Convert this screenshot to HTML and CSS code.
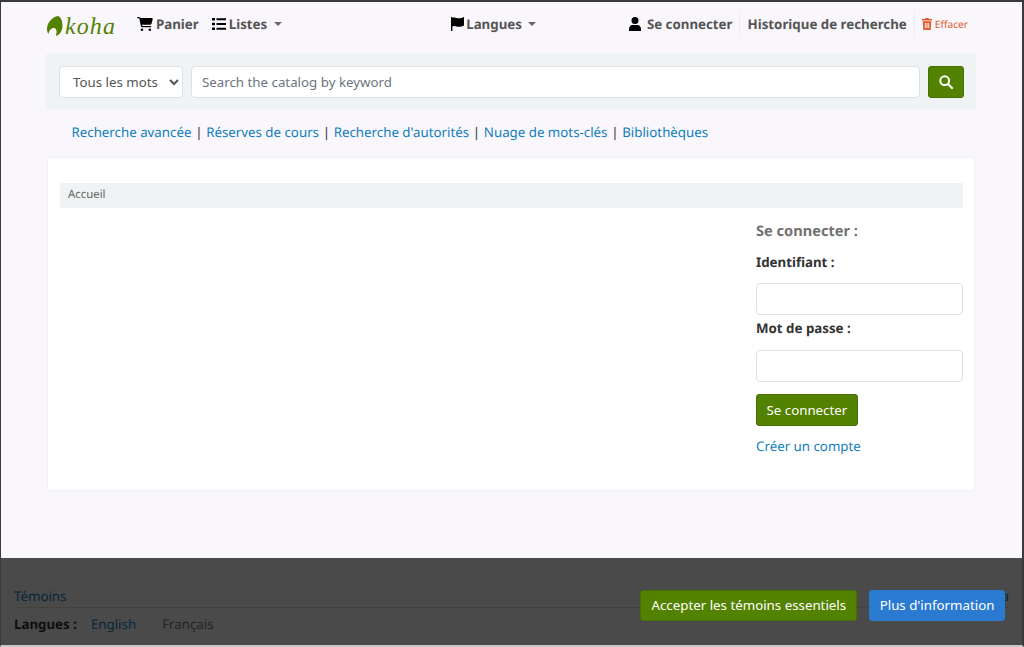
FILE: index.html
```html
<!DOCTYPE html>
<html lang="fr">
<head>
    <title>Koha › Se connecter</title>
    <link rel="stylesheet" href="styles.css">
</head>
<body>
<div class="window">
    <nav class="topbar">
        <a class="logo" href="#">
            <svg class="logo-leaf" viewBox="0 0 16 20" width="16" height="20"><path d="M11 0C5 1 0 7 0 13c0 2 .5 4 1.500 5 .5-3 2.500-6 5-6 2.500 0 3.500 2 3 5-.2 1-.5 2-.5 3 3.500-1 6.500-5 6.500-10C15.500 5 14 1 11 0z"/></svg>
            <span class="logo-text">koha</span>
        </a>
        <a class="nav-link cart" href="#">
            <svg class="icon" viewBox="0 0 576 512" width="16" height="14"><path d="M0 24C0 11 11 0 24 0h45c22 0 41 12 51 32h411c26 0 46 25 39 51l-41 152c-8 28-33 47-62 47H175l5 29c2 11 12 19 24 19h288c13 0 24 11 24 24s-11 24-24 24H204c-35 0-65-25-71-59L81 52c-1-4-4-4-12-4H24C11 48 0 37 0 24zm128 440a48 48 0 1 1 96 0 48 48 0 1 1-96 0zm336-48a48 48 0 1 1 0 96 48 48 0 1 1 0-96z"/></svg>
            Panier
        </a>
        <a class="nav-link caret lists" href="#">
            <svg class="icon" viewBox="0 0 14 12" width="14" height="12"><path d="M0 0h3v2.500H0zM4.500 0.300H14v2H4.500zM0 4.700h3v2.500H0zM4.500 5h9.500v2H4.500zM0 9.400h3v2.500H0zM4.500 9.700H14v2H4.500z"/></svg>
            Listes
        </a>
        <a class="nav-link caret langs" href="#">
            <svg class="icon" viewBox="0 0 14 14" width="13" height="14" preserveAspectRatio="none"><path d="M0 0h1.500v1c3-1.500 5 .5 7 .3 2 0 3.500-.5 5.500-1.300v8.500c-2 1-3.500 1.300-5.500 1.300-2 .2-4-1.700-7-.3V14H0z"/></svg>
            Langues
        </a>
        <div class="nav-right">
            <a class="nav-link user" href="#">
                <svg class="icon" viewBox="0 0 12 14" width="12" height="14"><circle cx="6" cy="3.500" r="3.500"/><path d="M3.500 8h5C10.500 8 12 9.800 12 12v2H0v-2c0-2.200 1.500-4 3.500-4z"/></svg>
                Se connecter
            </a>
            <a class="nav-link history" href="#">Historique de recherche</a>
            <a class="clear" href="#">
                <svg class="icon" viewBox="0 0 10 12" width="10" height="12"><path d="M3.500 0h3l.5 1h3v1.500H0V1h3zM.7 3.300h8.600L8.700 12H1.300zM2.800 5v5.300h.9V5zm2.700 0h-1v5.300h1zm1.700 0h-.9v5.300h.9z"/></svg>
                Effacer
            </a>
        </div>
    </nav>

    <form class="searchbar">
        <select class="search-type"><option>Tous les mots</option></select>
        <input class="search-input" type="text" placeholder="Search the catalog by keyword">
        <button class="btn btn-green search-btn" type="button" aria-label="Rechercher">
            <svg viewBox="0 0 14 14" width="14" height="14"><circle cx="5.700" cy="5.700" r="4.400" fill="none" stroke="#fff" stroke-width="2"/><path d="M9 9l4 4" stroke="#fff" stroke-width="2.200" stroke-linecap="round"/></svg>
        </button>
    </form>

    <ul class="more-search">
        <li><a href="#">Recherche avancée</a></li>
        <li><a href="#">Réserves de cours</a></li>
        <li><a href="#">Recherche d'autorités</a></li>
        <li><a href="#">Nuage de mots-clés</a></li>
        <li><a href="#">Bibliothèques</a></li>
    </ul>

    <main class="main">
        <div class="breadcrumb">Accueil</div>
        <div class="login-row">
            <form class="login">
                <h3>Se connecter :</h3>
                <label for="userid">Identifiant :</label>
                <input id="userid" type="text">
                <label for="password">Mot de passe :</label>
                <input id="password" type="password">
                <button class="btn btn-green login-btn" type="button">Se connecter</button>
                <a class="register" href="#">Créer un compte</a>
            </form>
        </div>
    </main>

    <footer class="footer">
        <div class="footer-top">
            <a href="#">Témoins</a>
            <a href="#">Propulsé par Koha</a>
        </div>
        <div class="footer-langs">
            <strong>Langues :</strong>
            <a href="#">English</a>
            <span>Français</span>
        </div>
    </footer>

    <div class="cookie-bar">
        <button class="btn btn-green" type="button">Accepter les témoins essentiels</button>
        <button class="btn btn-blue" type="button">Plus d'information</button>
    </div>
</div>
</body>
</html>
```

FILE: styles.css
```css
* {
    box-sizing: border-box;
}
html, body {
    margin: 0;
    height: 647px;
    overflow: hidden;
}
body {
    font-family: "Noto Sans", sans-serif;
    font-size: 13.3px;
    color: #333;
    background: #fff;
    text-rendering: geometricPrecision;
}
a {
    color: #127fbb;
    text-decoration: none;
}
.window {
    position: relative;
    height: 647px;
    background: #f9f7fc;
    border-top: 2px solid #3a3a3a;
    border-left: 1px solid #3a3a3a;
    border-right: 2px solid #3a3a3a;
    border-bottom: 2px solid #c8c8c8;
    overflow: hidden;
}
.topbar {
    display: flex;
    align-items: center;
    height: 44px;
    padding: 0 54px 0 46px;
}
.logo {
    display: flex;
    align-items: center;
    gap: 2px;
    width: 90px;
    margin-top: 4px;
    color: #538200;
}
.logo-leaf {
    fill: #538200;
}
.logo-text {
    margin-top: 2px;
    font-family: "Liberation Serif", serif;
    font-style: italic;
    font-size: 24px;
    letter-spacing: 1.100px;
    line-height: 1;
}
.nav-link {
    display: flex;
    align-items: center;
    gap: 3px;
    font-weight: 700;
    color: #555;
    white-space: nowrap;
}
.icon {
    fill: #000;
}
.caret::after {
    content: "";
    margin-left: 4px;
    border-top: 4px solid #666;
    border-left: 4px solid transparent;
    border-right: 4px solid transparent;
}
.lists {
    margin-left: 13px;
}
.langs {
    gap: 2px;
    margin-left: 169px;
}
.nav-right {
    display: flex;
    align-items: center;
    margin-left: auto;
}
.user {
    gap: 6px;
}
.history {
    margin-left: 6px;
    padding: 0 7px 0 8px;
    height: 25px;
    border-left: 1px solid #eee;
    border-right: 1px solid #eee;
}
.clear {
    display: flex;
    align-items: center;
    gap: 3px;
    margin-left: 7px;
    font-size: 10.2px;
    color: #e2582c;
}
.clear .icon {
    fill: #e2582c;
}
.searchbar {
    display: flex;
    align-items: center;
    height: 56px;
    margin: 8px 46px 0 45px;
    padding: 0 12px 0 13px;
    background: #eff3f3;
}
.search-type, .search-input, .login input {
    height: 32px;
    border: 1px solid #dee2e6;
    border-radius: 4px;
    background: #fff;
    font-family: inherit;
    font-size: 13.3px;
    color: #555;
}
.search-type {
    width: 124px;
    padding: 0 0 0 9px;
    margin-right: 8px;
}
.search-input {
    flex: 1;
    padding: 0 10px;
    margin-right: 8px;
}
.search-input::placeholder {
    color: #6c757d;
}
.btn {
    font-family: inherit;
    font-size: 13.3px;
    color: #fff;
    height: 31px;
    padding: 0 10px 1px;
    border-radius: 3px;
    cursor: pointer;
}
.btn-green {
    background: #538200;
    border: 1px solid #476f00;
}
.btn-blue {
    padding: 0 9.5px 1px;
    background: #2a7ad2;
    border: 1px solid #2a7ad2;
}
.search-btn {
    display: flex;
    align-items: center;
    justify-content: center;
    width: 36px;
    height: 32px;
    padding: 0;
}
.more-search {
    display: flex;
    list-style: none;
    margin: 0;
    padding: 12px 0 0 70.5px;
    line-height: 20px;
}
.more-search li + li::before {
    content: "|";
    margin: 0 3.7px;
    color: #333;
}
.main {
    height: 334px;
    margin: 15px 47px 0 46px;
    padding: 25px 11px 0 12px;
    background: #fff;
    border: 1px solid #f3f1f6;
}
.breadcrumb {
    height: 25px;
    padding-left: 8px;
    font-size: 11.4px;
    line-height: 24px;
    color: #666;
    background: #eff3f3;
}
.login-row {
    display: flex;
    justify-content: flex-end;
}
.login {
    display: flex;
    flex-direction: column;
    align-items: flex-start;
    width: 207px;
}
.login h3 {
    margin: 13px 0 0;
    font-size: 14.6px;
    line-height: 20px;
    font-weight: 700;
    color: #727272;
}
.login label {
    font-weight: 700;
    line-height: 20px;
    color: #333;
}
.login h3 + label {
    margin-top: 11px;
}
.login input {
    width: 100%;
    margin: 11px 0 0;
}
.login input + label {
    margin-top: 3px;
}
.login input + label + input {
    margin-top: 12px;
}
.login-btn {
    margin-top: 12px;
    height: 32px;
    padding: 0 9.5px;
}
.register {
    margin-top: 10px;
    line-height: 20px;
}
.footer {
    margin-top: 95px;
    padding: 0 13px;
}
.footer-top {
    display: flex;
    justify-content: space-between;
    height: 22px;
    line-height: 20px;
    border-bottom: 1px solid #ddd;
}
.footer-langs {
    display: flex;
    gap: 14px;
    padding-top: 6px;
    line-height: 20px;
}
.footer-langs span {
    margin-left: 12px;
    color: #777;
}
.cookie-bar {
    position: absolute;
    left: 0;
    right: 0;
    top: 556px;
    bottom: 0;
    display: flex;
    justify-content: flex-end;
    align-items: flex-start;
    gap: 12px;
    padding: 32px 17px 0 0;
    background: rgba(0, 0, 0, 0.7);
}
```
